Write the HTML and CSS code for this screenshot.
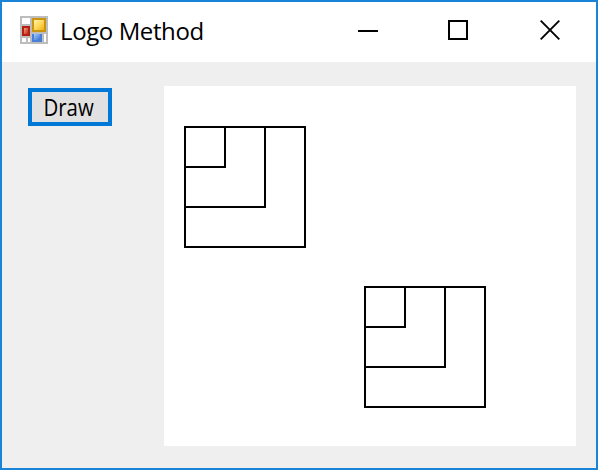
FILE: index.html
```html
<!DOCTYPE html>
<html lang="en">
<head>
<meta charset="utf-8">
<title>Logo Method</title>
<link rel="stylesheet" href="styles.css">
</head>
<body>
<div class="window">
  <header class="titlebar">
    <svg class="app-icon" viewBox="0 0 28 28" shape-rendering="crispEdges">
      <defs>
        <linearGradient id="gold" x1="0" y1="0" x2="1" y2="1"><stop offset="0" stop-color="#fff0b0"/><stop offset=".5" stop-color="#ffd95c"/><stop offset="1" stop-color="#efb010"/></linearGradient>
        <linearGradient id="red" x1="0" y1="0" x2="1" y2="1"><stop offset="0" stop-color="#f0a080"/><stop offset="1" stop-color="#c02818"/></linearGradient>
        <linearGradient id="blue" x1="0" y1="0" x2="1" y2="1"><stop offset="0" stop-color="#a0ccff"/><stop offset="1" stop-color="#3c70cc"/></linearGradient>
      </defs>
      <path fill="#bdbdbd" d="M0 0h28v28H0z"/>
      <path fill="#fff" d="M2 2h8v6H2zM2 22h4v4H2zM8 22h2v4H8zM24 18h2v8h-2z"/>
      <path fill="#c89510" d="M12 2h14v14H12z"/>
      <path fill="url(#gold)" d="M14 4h10v10H14z"/>
      <path fill="#b52010" d="M2 10h8v10H2z"/>
      <path fill="url(#red)" d="M4 12h4v6H4z"/>
      <path fill="#4a7fd8" d="M12 18h10v8H12z"/>
      <path fill="url(#blue)" d="M14 18h6v6h-6z"/>
    </svg>
    <h1 class="title">Logo Method</h1>
    <div class="controls">
      <svg class="control" viewBox="0 0 20 20"><path d="M0 11h20"/></svg>
      <svg class="control" viewBox="0 0 20 20"><path d="M1 1h18v18H1z"/></svg>
      <svg class="control close" viewBox="0 0 20 20"><path d="M.7.7l18.6 18.6M19.3.7L.7 19.3"/></svg>
    </div>
  </header>
  <main class="content">
    <button class="draw"><span class="label">Draw</span></button>
    <svg class="canvas" viewBox="0 0 412 360">
      <defs><path id="squares" d="M1 1h40v40H1zM1 1h80v80H1zM1 1h120v120H1z"/></defs>
      <use href="#squares" x="20" y="40"/>
      <use href="#squares" x="200" y="200"/>
    </svg>
  </main>
</div>
</body>
</html>
```

FILE: styles.css
```css
* { box-sizing: border-box; }
body { margin: 0; }
.window {
  width: 598px;
  height: 470px;
  border: 2px solid #1883d7;
  background: #efefef;
  font-family: "Open Sans", "Noto Sans", sans-serif;
  color: #000;
  overflow: hidden;
}
.titlebar {
  display: flex;
  align-items: center;
  height: 60px;
  padding: 0 36px 0 18px;
  background: #fff;
}
.app-icon { width: 28px; height: 28px; margin-top: -4px; }
.title {
  margin: -2px 0 0 12px;
  font-size: 24px;
  font-weight: 400;
  line-height: 32px;
  letter-spacing: -0.4px;
  white-space: nowrap;
}
.controls { display: flex; gap: 70px; margin: -4px 0 0 auto; }
.control { width: 20px; height: 20px; fill: none; stroke: #000; stroke-width: 2; }
.close { margin-left: 2px; stroke-width: 1.9; }
.content {
  display: flex;
  justify-content: space-between;
  align-items: flex-start;
  padding: 24px 20px 0 26px;
}
.draw {
  width: 84px;
  height: 38px;
  margin: 2px 0 0;
  padding: 0 3px 0 0;
  border: 4px solid #0078d7;
  border-radius: 0;
  background: #e1e1e1;
  color: #000;
  font: 24px/30px "Open Sans", "Noto Sans", sans-serif;
}
.label { display: inline-block; transform: scaleX(0.85); }
.canvas { width: 412px; height: 360px; background: #fff; fill: none; stroke: #000; stroke-width: 2; }
```
